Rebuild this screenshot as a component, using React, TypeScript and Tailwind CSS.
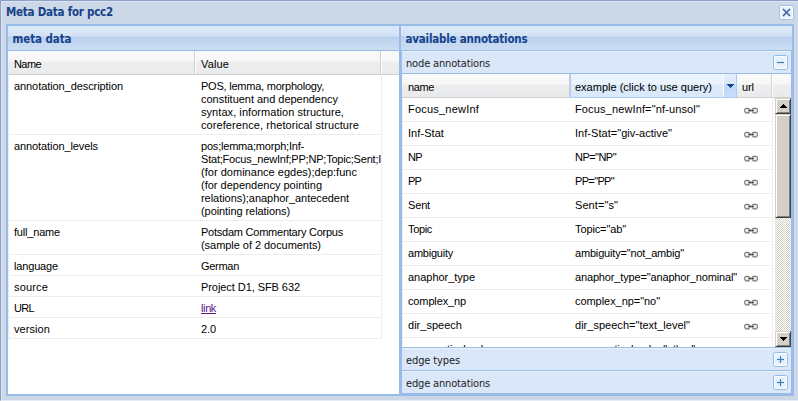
import React from "react";

const gridFont = "font-['Liberation_Sans',Arial,sans-serif] text-[11px] leading-[13px] text-black";
const titleFont = "font-['DejaVu_Sans_Condensed','DejaVu_Sans',sans-serif] [font-stretch:condensed] text-[11.5px] leading-[15px] font-bold text-[#15428b] whitespace-nowrap";
const barFont = "font-['DejaVu_Sans_Condensed','DejaVu_Sans',sans-serif] [font-stretch:condensed] text-[11px] leading-[15px] text-[#222] whitespace-nowrap";

/** A line of text stretched or tightened to a given width. */
function T({ w, children, cls = "" }: { w?: number; children: string; cls?: string }) {
  const ref = React.useRef<HTMLSpanElement>(null);
  React.useLayoutEffect(() => {
    const el = ref.current;
    if (!el || !w) return;
    el.style.letterSpacing = "0px";
    const natural = el.getBoundingClientRect().width;
    el.style.letterSpacing = (w - natural) / children.length + "px";
  }, [w, children]);
  return <span ref={ref} className={"inline-block whitespace-pre " + cls}>{children}</span>;
}

type Line = [string, number];
const meta: { name: Line; value: Line[]; link?: boolean }[] = [
  { name: ["annotation_description", 109], value: [["POS, lemma, morphology,", 123], ["constituent and dependency", 137], ["syntax, information structure,", 143], ["coreference, rhetorical structure", 158]] },
  { name: ["annotation_levels", 84], value: [["pos;lemma;morph;Inf-", 103], ["Stat;Focus_newInf;PP;NP;Topic;Sent;Inf-Stat", 211], ["(for dominance egdes);dep:func", 156], ["(for dependency pointing", 121], ["relations);anaphor_antecedent", 148], ["(pointing relations)", 89]] },
  { name: ["full_name", 46], value: [["Potsdam Commentary Corpus", 142], ["(sample of 2 documents)", 120]] },
  { name: ["language", 44], value: [["German", 38]] },
  { name: ["source", 34], value: [["Project D1, SFB 632", 99]] },
  { name: ["URL", 20], value: [["link", 15]], link: true },
  { name: ["version", 36], value: [["2.0", 15]] },
];

const nodes: [string, number, string, number][] = [
  ["Focus_newInf", 71, 'Focus_newInf="nf-unsol"', 125],
  ["Inf-Stat", 36, 'Inf-Stat="giv-active"', 97],
  ["NP", 14, 'NP="NP"', 41],
  ["PP", 13, 'PP="PP"', 39],
  ["Sent", 22, 'Sent="s"', 43],
  ["Topic", 24, 'Topic="ab"', 51],
  ["ambiguity", 45, 'ambiguity="not_ambig"', 109],
  ["anaphor_type", 67, 'anaphor_type="anaphor_nominal"', 162],
  ["complex_np", 58, 'complex_np="no"', 85],
  ["dir_speech", 54, 'dir_speech="text_level"', 115],
  ["grammatical_role", 81, 'grammatical_role="other"', 120],
];

function Chain() {
  return (
    <svg width="16" height="9" viewBox="0 0 16 9" fill="none">
      <path d="M2 7.5h5M9.5 7.5h5" stroke="#d2d2d2" />
      <rect x="1.5" y="2.5" width="5.5" height="4" rx="1.7" stroke="#8c8c8c" strokeWidth="1.3" />
      <rect x="9" y="2.5" width="5.5" height="4" rx="1.7" stroke="#8c8c8c" strokeWidth="1.3" />
      <path d="M5 4.5h6" stroke="#505050" strokeWidth="1.2" />
      <path d="M3 2.5h3M10 2.5h3" stroke="#777" />
    </svg>
  );
}

function Tool({ kind }: { kind: "plus" | "minus" | "close" }) {
  return (
    <svg width="15" height="15" viewBox="0 0 15 15" fill="none" className="shrink-0">
      <rect x=".5" y=".5" width="14" height="14" rx="2" fill="#e6f1fc" stroke={kind === "close" ? "#a2bfe4" : "#8fbce8"} />
      <rect x="1.5" y="1.5" width="12" height="12" rx="1" stroke="#fff" />
      {kind === "close" ? (
        <path d="M4 4l7 7M11 4l-7 7" stroke="#45619d" strokeWidth="1.6" />
      ) : (
        <>
          <path d="M4 7.5h7" stroke="#3f7db5" strokeWidth="1.2" />
          {kind === "plus" && <path d="M7.5 4v7" stroke="#3f7db5" strokeWidth="1.2" />}
        </>
      )}
    </svg>
  );
}

function PanelTitle({ text, w }: { text: string; w: number }) {
  return (
    <div className={"h-[25px] shrink-0 border-b border-[#99bbe8] bg-[linear-gradient(#dce9f7_0px,#d3e2f4_10px,#bad1ef_11px,#cddef3_24px)] pt-1.5 pl-[4.5px] " + titleFont}>
      <T w={w}>{text}</T>
    </div>
  );
}

function Bar({ text, w, open = false }: { text: string; w: number; open?: boolean }) {
  return (
    <div className={"flex h-[23px] shrink-0 justify-between border-[#99bbe8] bg-[#d9e7f8] pt-1 pr-[3px] pl-1 shadow-[inset_0_1px_0_#eaf2fb] " + (open ? "border-b " : "border-t ") + barFont}>
      <div className="pt-px"><T w={w}>{text}</T></div>
      <Tool kind={open ? "minus" : "plus"} />
    </div>
  );
}

const headBg = "bg-[linear-gradient(#f9f9f9_0px,#f7f7f7_10px,#eeeeef_11px,#e9eaec_23px)]";

function ScrollButton({ down = false }: { down?: boolean }) {
  return (
    <div className="flex h-4 w-4 shrink-0 items-center justify-center border border-t-[#d4d0c8] border-r-[#404040] border-b-[#404040] border-l-[#d4d0c8] bg-[#d4d0c8] shadow-[inset_1px_1px_0_#fff,inset_-1px_-1px_0_#808080]">
      <svg width="7" height="4" viewBox="0 0 7 4" shapeRendering="crispEdges">
        <path d={down ? "M0 0h7v1h-1v1h-1v1h-1v1h-1v-1h-1v-1h-1v-1h-1z" : "M3 0h1v1h1v1h1v1h1v1h-7v-1h1v-1h1v-1h1z"} />
      </svg>
    </div>
  );
}

export default function App() {
  return (
    <div className="flex h-[401px] w-[798px] flex-col overflow-hidden border-t border-b border-l border-t-[#8c9fc9] border-b-[#e6ebf3] border-l-[#8c9fc9] bg-[#ccd8e7] shadow-[inset_1px_1px_0_#dce4f0]">
      <div className="flex h-[23px] shrink-0 items-start justify-between pt-1 pr-1 pl-[5px]">
        <div className={titleFont}><T w={107}>Meta Data for pcc2</T></div>
        <Tool kind="close" />
      </div>
      <div className="mr-1 ml-[5px] flex h-[372px] shrink-0 border-2 border-[#99bbe8] bg-white">
        <section className="flex w-[391px] shrink-0 flex-col">
          <PanelTitle text="meta data" w={59} />
          <div className={"flex h-6 shrink-0 border-b border-[#d0d0d0] pl-px " + headBg + " " + gridFont}>
            <div className="w-[186px] border-r border-[#d0d0d0] pt-[7px] pl-[5px] shadow-[1px_0_0_#fff]"><T w={27}>Name</T></div>
            <div className="w-[186px] border-r border-[#d0d0d0] pt-[7px] pl-1.5 shadow-[1px_0_0_#fff]"><T w={28}>Value</T></div>
          </div>
          <div className={"w-[374px] " + gridFont}>
            {meta.map((m) => (
              <div key={m.name[0]} className="flex border border-t-white border-r-[#ededed] border-b-[#ededed] border-l-[#ededed] pt-1 pb-0.5">
                <div className="w-[186px] shrink-0 pl-[5px]"><T w={m.name[1]}>{m.name[0]}</T></div>
                <div className="w-[186px] shrink-0 overflow-hidden pl-1.5">
                  {m.value.map(([t, w]) => (
                    <div key={t} className="h-[13px] whitespace-nowrap">
                      <T w={w} cls={m.link ? "text-[#551a8b] underline" : ""}>{t}</T>
                    </div>
                  ))}
                </div>
              </div>
            ))}
          </div>
        </section>
        <section className="flex w-[393px] shrink-0 flex-col border-l-2 border-[#99bbe8]">
          <PanelTitle text="available annotations" w={122} />
          <div className="flex h-[343px] flex-col border-r border-b border-l border-[#99bbe8]">
            <Bar text="node annotations" w={84} open />
            <div className={"flex h-6 shrink-0 border-b border-[#d0d0d0] pl-px " + headBg + " " + gridFont}>
              <div className="w-[167px] border-r border-[#d0d0d0] pt-[7px] pl-[5px]"><T w={26}>name</T></div>
              <div className="flex h-6 w-[167px] justify-between border-b border-l border-[#aaccf6] bg-[linear-gradient(#ebf3fd_0px,#ebf3fd_10px,#dceafa_11px,#d9e8fb_23px)]">
                <div className="pt-[7px] pl-1"><T w={137}>example (click to use query)</T></div>
                <div className="flex w-[14px] items-start justify-center border-r border-l border-r-[#aaccf6] border-l-white bg-[linear-gradient(#e4effd_0px,#d8e8fb_10px,#bcd7fa_11px,#c8dffb_23px)] pt-[10px]">
                  <svg width="7" height="4" viewBox="0 0 7 4" shapeRendering="crispEdges"><path fill="#15428b" d="M0 0h7v1h-1v1h-1v1h-1v1h-1v-1h-1v-1h-1v-1h-1z" /></svg>
                </div>
              </div>
              <div className="w-[35px] border-r border-[#d0d0d0] pt-[7px] pl-[5px] shadow-[1px_0_0_#fff]"><T w={12}>url</T></div>
            </div>
            <div className="flex h-[249px] shrink-0 justify-between overflow-hidden">
              <div className={"w-[371px] shrink-0 " + gridFont}>
                {nodes.map(([n, nw, e, ew]) => (
                  <div key={n} className="flex h-6 border border-t-white border-r-[#ededed] border-b-[#ededed] border-l-[#ededed] pt-1">
                    <div className="w-[167px] shrink-0 pl-[5px]"><T w={nw}>{n}</T></div>
                    <div className="h-4 w-[167px] shrink-0 overflow-hidden pl-[5px]"><T w={ew}>{e}</T></div>
                    <div className="pt-[3px] pl-1.5"><Chain /></div>
                  </div>
                ))}
              </div>
              <div className="flex w-4 flex-col bg-[#e9e7e3] bg-[repeating-conic-gradient(#d4d0c8_0_25%,#fff_0_50%)] bg-[length:2px_2px]">
                <ScrollButton />
                <div className="h-[104px] shrink-0 border border-t-[#d4d0c8] border-r-[#404040] border-b-[#404040] border-l-[#d4d0c8] bg-[#d4d0c8] shadow-[inset_1px_1px_0_#fff,inset_-1px_-1px_0_#808080]" />
                <div className="grow" />
                <ScrollButton down />
              </div>
            </div>
            <Bar text="edge types" w={54} />
            <Bar text="edge annotations" w={84} />
          </div>
        </section>
      </div>
    </div>
  );
}
